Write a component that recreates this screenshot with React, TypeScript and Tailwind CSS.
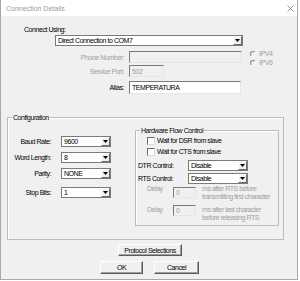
import React from "react";

const Arrow = () => (
  <svg width="5" height="3" viewBox="0 0 5 3">
    <polygon points="0,0 5,0 2.5,3" fill="#000" />
  </svg>
);

function Combo({ className, value }: { className: string; value: string }) {
  return (
    <div className={"flex bg-white border border-[#7a7a7a] " + className}>
      <div className="flex-1 pl-[2px] leading-[9px] overflow-hidden text-black">{value}</div>
      <div className="w-[9px] h-full flex items-center justify-center bg-[#f0f0f0] border-t border-l border-t-white border-l-white border-r border-b border-r-[#6b6b6b] border-b-[#6b6b6b]">
        <Arrow />
      </div>
    </div>
  );
}

function Field({ className, value, disabled }: { className: string; value?: string; disabled?: boolean }) {
  return (
    <div
      className={
        "border-t border-l border-t-[#7a7a7a] border-l-[#7a7a7a] border-b border-r border-b-[#e6e6e6] border-r-[#e6e6e6] pl-[2px] flex items-center leading-[9px] " +
        (disabled ? "bg-[#f0f0f0] text-[#a0a0a0] " : "bg-white text-black ") +
        className
      }
    >
      {value}
    </div>
  );
}

function Radio({ label }: { label: string }) {
  return (
    <div className="flex items-center h-[9px]">
      <div className="w-[6px] h-[6px] rounded-full border border-t-[#8a8a8a] border-l-[#8a8a8a] border-b-[#f8f8f8] border-r-[#f8f8f8] bg-[#f0f0f0]" />
      <span className="ml-[3px] leading-[9px] text-[#a0a0a0]">{label}</span>
    </div>
  );
}

function Check({ label }: { label: string }) {
  return (
    <div className="flex items-center h-[9px] ml-[11px]">
      <div className="w-[8px] h-[8px] bg-white border-t border-l border-t-[#6d6d6d] border-l-[#6d6d6d] border-b border-r border-b-[#dcdcdc] border-r-[#dcdcdc]" />
      <span className="ml-[2px] leading-[9px] text-black">{label}</span>
    </div>
  );
}

function Btn({ className, label }: { className: string; label: string }) {
  return (
    <div
      className={
        "flex items-center justify-center bg-[#f0f0f0] border-t border-l border-t-white border-l-white border-b border-r border-b-[#5a5a5a] border-r-[#5a5a5a] shadow-[inset_-1px_-1px_0_#a0a0a0] leading-[9px] text-black " +
        className
      }
    >
      {label}
    </div>
  );
}

export default function App() {
  return (
    <div className="w-[300px] h-[281px] bg-white font-['Liberation_Sans',Arial,sans-serif] text-[7px] tracking-[-0.45px] leading-[9px] whitespace-nowrap text-black">
      <div className="w-[298px] h-[280px] border-l border-r border-b border-[#a8a8a8] flex flex-col">
        <div className="h-[16px] bg-white flex items-center justify-between pl-[5px] pr-[3px]">
          <span className="text-[7px] tracking-normal leading-[9px] text-[#9a9a9a]">Connection Details</span>
          <svg width="7" height="7" viewBox="0 0 7 7">
            <path d="M0.5 0.5 L6.5 6.5 M6.5 0.5 L0.5 6.5" stroke="#8a8a8a" strokeWidth="0.9" />
          </svg>
        </div>
        <div className="flex-1 bg-[#f0f0f0] flex flex-col">
          <div className="mt-[9px] ml-[23px] h-[9px]">Connect Using:</div>
          <Combo className="mt-[1px] ml-[54px] w-[188px] h-[11px]" value="Direct Connection to COM7" />

          <div className="mt-[5px] flex">
            <div className="flex flex-col w-[241px]">
              <div className="flex h-[12px] items-center">
                <div className="w-[123px] text-right text-[#a0a0a0]">Phone Number:</div>
                <Field className="ml-[5px] w-[113px] h-[12px]" disabled />
              </div>
              <div className="mt-[2px] flex h-[12px] items-center">
                <div className="w-[123px] text-right text-[#a0a0a0]">Service Port:</div>
                <Field className="ml-[5px] w-[35px] h-[12px]" value="502" disabled />
              </div>
            </div>
            <div className="ml-[8px] mt-[-2px] flex flex-col">
              <Radio label="IPV4" />
              <Radio label="IPV6" />
            </div>
          </div>

          <div className="mt-[4px] flex h-[13px] items-center">
            <div className="w-[123px] text-right">Alias:</div>
            <Field className="ml-[5px] w-[112px] h-[13px]" value="TEMPERATURA" />
          </div>

          <fieldset className="mt-[19px] ml-[6px] w-[277px] h-[127px] border border-[#bcbcbc] shadow-[inset_1px_1px_0_#fff]">
            <legend className="ml-[4px] px-[1px] leading-[9px]">Configuration</legend>
            <div className="flex items-start">
              <div className="mt-[14px] flex flex-col">
                <div className="flex items-center h-[11px]">
                  <div className="w-[43px] text-right">Baud Rate:</div>
                  <Combo className="ml-[10px] w-[50px] h-[11px]" value="9600" />
                </div>
                <div className="mt-[5px] flex items-center h-[11px]">
                  <div className="w-[43px] text-right">Word Length:</div>
                  <Combo className="ml-[10px] w-[50px] h-[11px]" value="8" />
                </div>
                <div className="mt-[5px] flex items-center h-[11px]">
                  <div className="w-[43px] text-right">Parity:</div>
                  <Combo className="ml-[10px] w-[50px] h-[11px]" value="NONE" />
                </div>
                <div className="mt-[8px] flex items-center h-[11px]">
                  <div className="w-[43px] text-right">Stop Bits:</div>
                  <Combo className="ml-[10px] w-[50px] h-[11px]" value="1" />
                </div>
              </div>

              <fieldset className="ml-[24px] mt-[4px] w-[144px] h-[100px] border border-[#bcbcbc] shadow-[inset_1px_1px_0_#fff]">
                <legend className="ml-[4px] px-[1px] leading-[9px]">Hardware Flow Control</legend>
                <div className="flex flex-col">
                  <div className="mt-[1px]">
                    <Check label="Wait for DSR from slave" />
                  </div>
                  <div className="mt-[2px]">
                    <Check label="Wait for CTS from slave" />
                  </div>
                  <div className="mt-[4px] flex items-center h-[11px]">
                    <div className="ml-[2px] w-[50px]">DTR Control:</div>
                    <Combo className="w-[60px] h-[11px]" value="Disable" />
                  </div>
                  <div className="mt-[2px] flex items-center h-[11px]">
                    <div className="ml-[2px] w-[50px]">RTS Control:</div>
                    <Combo className="w-[60px] h-[11px]" value="Disable" />
                  </div>
                  <div className="mt-[1px] flex items-start">
                    <div className="ml-[11px] w-[26px] leading-[8px] text-[#a0a0a0]">Delay</div>
                    <Field className="mt-[2px] w-[23px] h-[11px]" value="0" disabled />
                    <div className="ml-[6px] leading-[8px] text-[#a0a0a0]">
                      ms after RTS before
                      <br />
                      transmitting first character
                    </div>
                  </div>
                  <div className="mt-[4px] flex items-start">
                    <div className="ml-[11px] w-[26px] leading-[10px] text-[#a0a0a0]">Delay</div>
                    <Field className="w-[23px] h-[11px]" value="0" disabled />
                    <div className="ml-[6px] mt-[1px] leading-[8px] text-[#a0a0a0]">
                      ms after last character
                      <br />
                      before releasing RTS
                    </div>
                  </div>
                </div>
              </fieldset>
            </div>
          </fieldset>

          <Btn className="mt-[4px] ml-[117px] w-[64px] h-[12px]" label="Protocol Selections" />
          <div className="mt-[5px] flex">
            <Btn className="ml-[99px] w-[43px] h-[13px]" label="OK" />
            <Btn className="ml-[11px] w-[45px] h-[13px]" label="Cancel" />
          </div>
        </div>
      </div>
    </div>
  );
}
